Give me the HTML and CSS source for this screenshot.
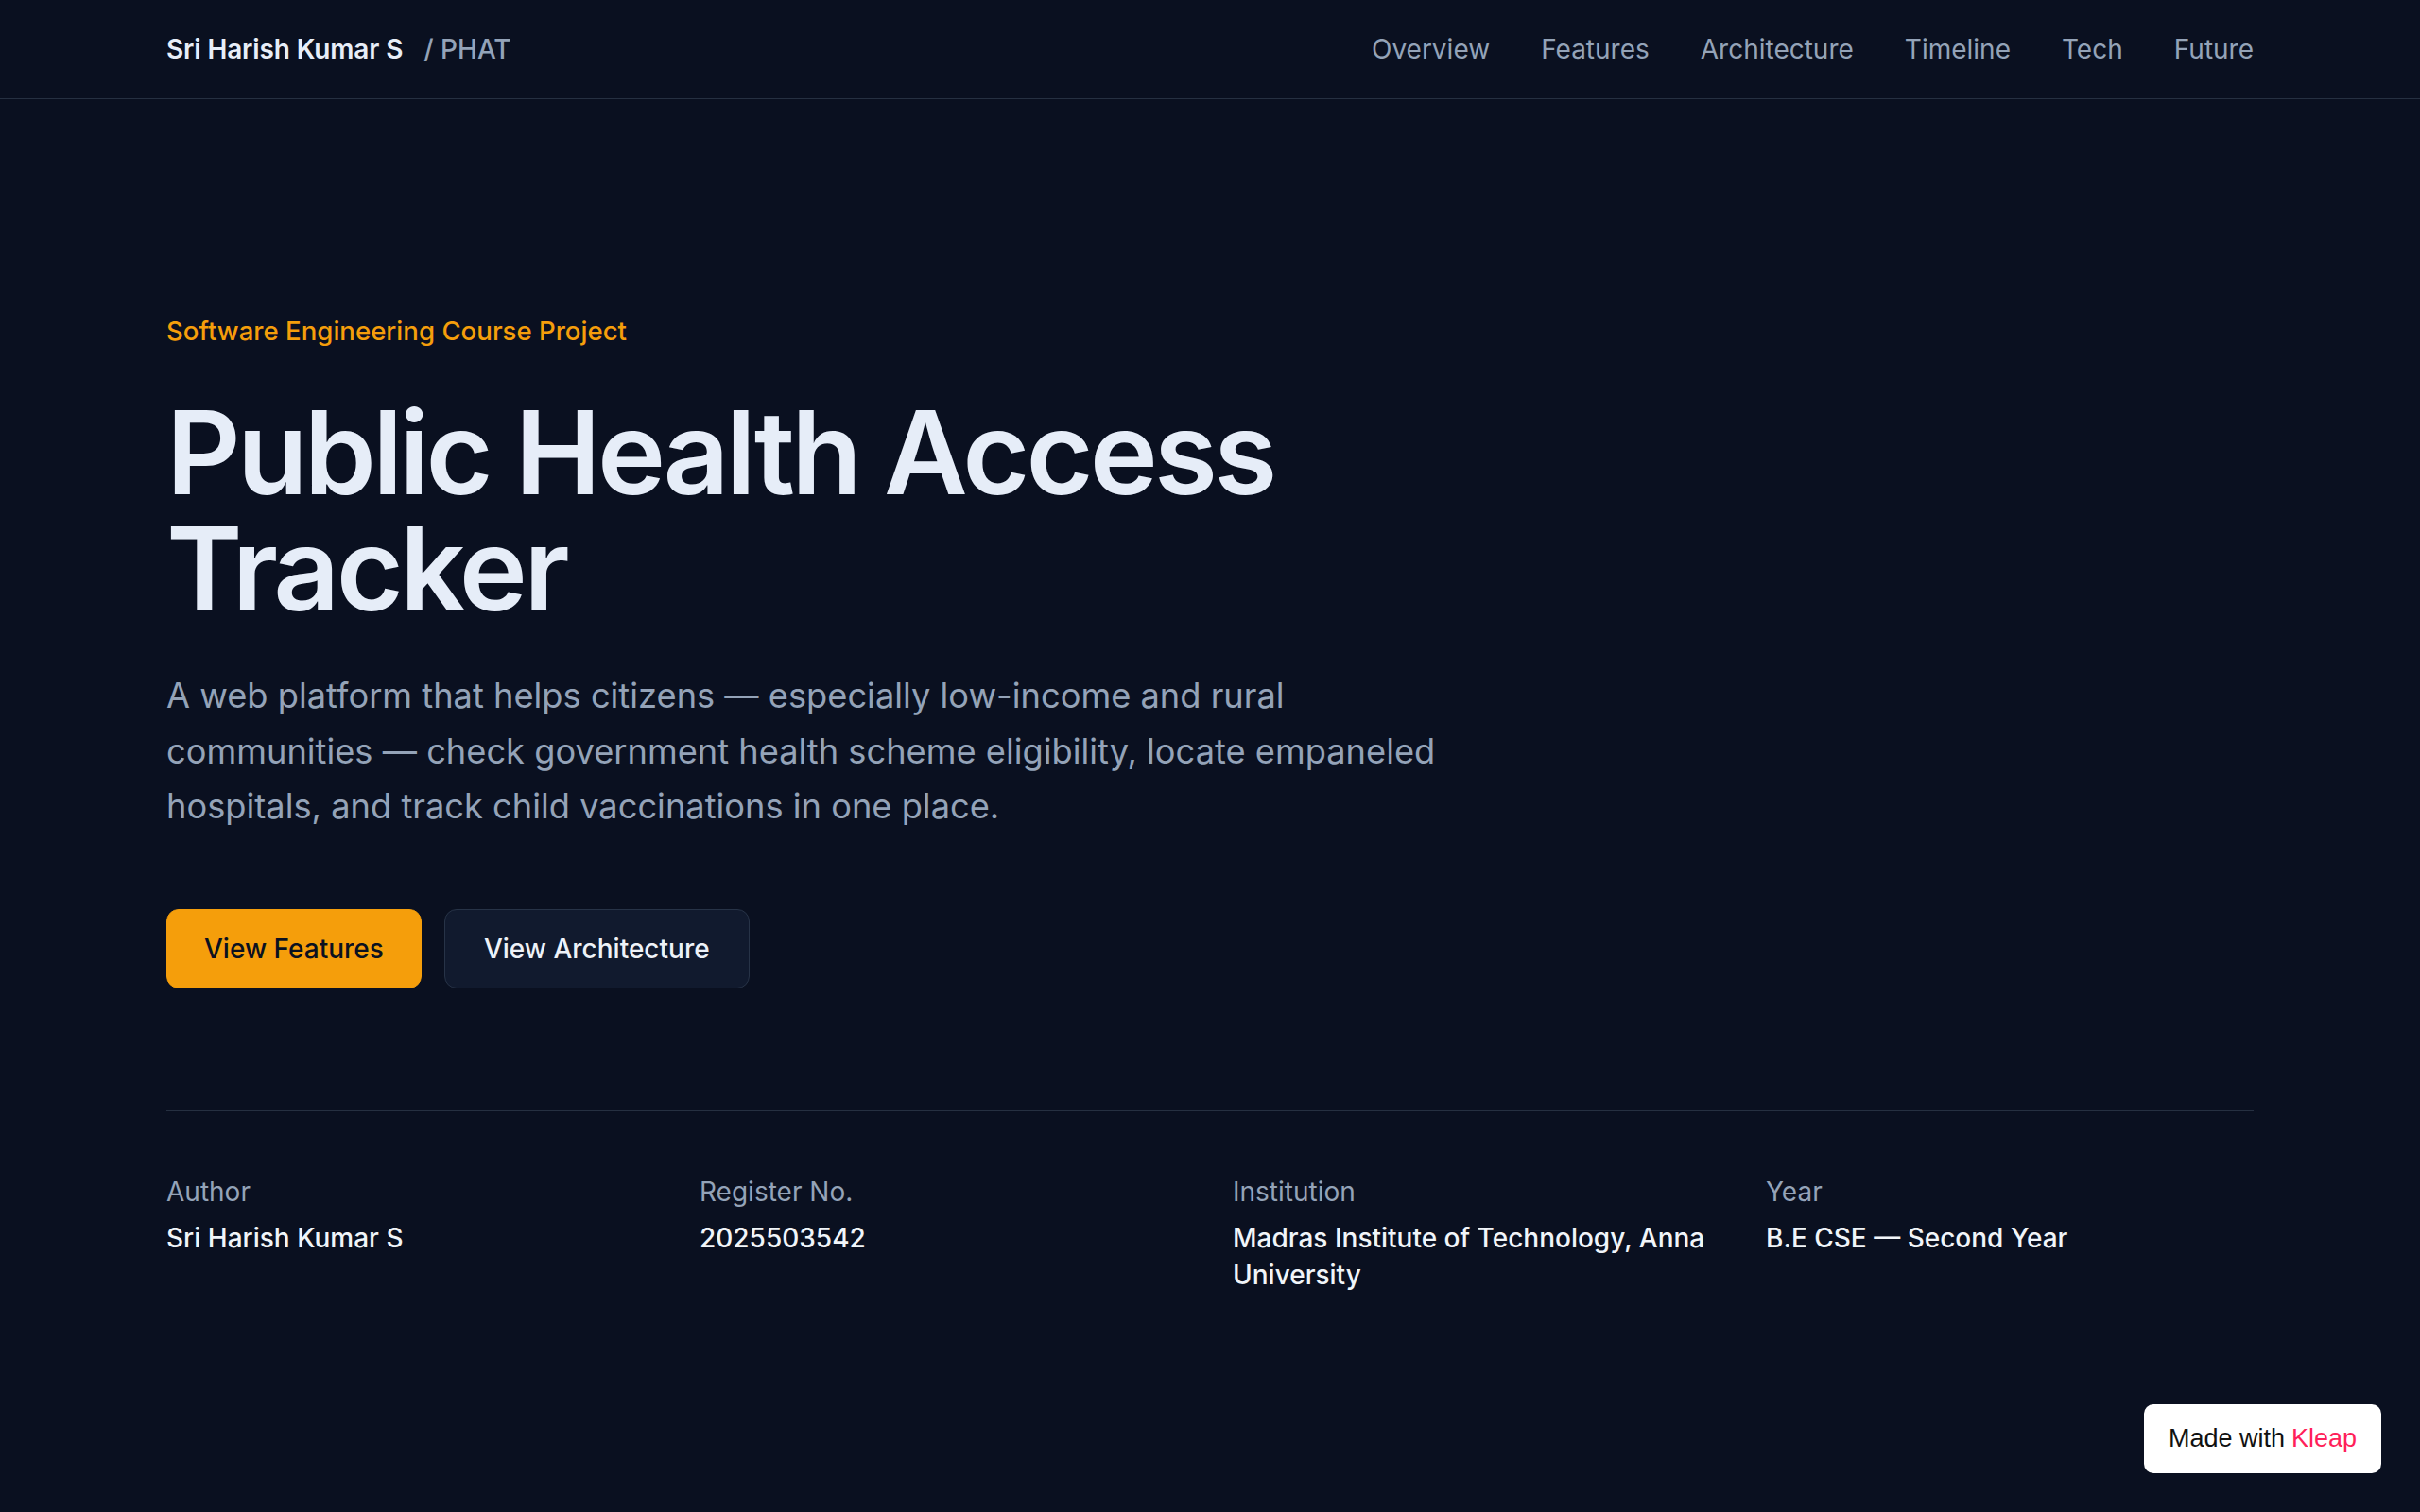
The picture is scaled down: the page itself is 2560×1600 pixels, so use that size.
FILE: index.html
```html
<!DOCTYPE html>
<html lang="en">
<head>
<meta charset="utf-8">
<title>Public Health Access Tracker</title>
<link rel="stylesheet" href="styles.css">
</head>
<body>
<header class="nav">
  <div class="nav-inner">
    <div class="brand"><span class="brand-name">Sri Harish Kumar S</span><span class="brand-sub">/ PHAT</span></div>
    <nav class="links">
      <a href="#overview">Overview</a>
      <a href="#features">Features</a>
      <a href="#architecture">Architecture</a>
      <a href="#timeline">Timeline</a>
      <a href="#tech">Tech</a>
      <a href="#future">Future</a>
    </nav>
  </div>
</header>
<main class="hero">
  <p class="eyebrow">Software Engineering Course Project</p>
  <h1 class="title">Public Health Access<br>Tracker</h1>
  <p class="lead">A web platform that helps citizens — especially low-income and rural communities — check government health scheme eligibility, locate empaneled hospitals, and track child vaccinations in one place.</p>
  <div class="actions">
    <a class="btn btn-primary" href="#features">View Features</a>
    <a class="btn btn-secondary" href="#architecture">View Architecture</a>
  </div>
  <div class="meta">
    <div class="meta-item"><div class="meta-label">Author</div><div class="meta-value">Sri Harish Kumar S</div></div>
    <div class="meta-item"><div class="meta-label">Register No.</div><div class="meta-value">2025503542</div></div>
    <div class="meta-item"><div class="meta-label">Institution</div><div class="meta-value">Madras Institute of Technology, Anna University</div></div>
    <div class="meta-item"><div class="meta-label">Year</div><div class="meta-value">B.E CSE — Second Year</div></div>
  </div>
</main>
<a class="badge" href="#">Made with <span class="kleap">Kleap</span></a>
</body>
</html>
```
FILE: styles.css
```css
* { box-sizing: border-box; }
html, body { margin: 0; padding: 0; }
body {
  background: #0a1020;
  color: #e2e8f0;
  font-family: Inter, "Noto Sans", sans-serif;
  min-height: 1600px;
}
a { text-decoration: none; color: inherit; }

.nav {
  border-bottom: 1px solid #263041;
}
.nav-inner {
  height: 104px;
  padding: 0 176px;
  display: flex;
  align-items: center;
  justify-content: space-between;
}
.brand {
  font-size: 28px;
  display: flex;
  align-items: baseline;
  gap: 22px;
}
.brand-name { font-weight: 600; color: #e8eef8; letter-spacing: -0.005em; }
.brand-sub { font-weight: 500; color: #94a3b8; }
.links {
  display: flex;
  gap: 54px;
  font-size: 28px;
}
.links a { color: #94a3b8; }

.hero {
  padding: 224px 176px 0;
}
.eyebrow {
  margin: 0;
  font-size: 27.6px;
  line-height: 42px;
  color: #f59e0b;
  font-weight: 500;
}
.title {
  margin: 46px 0 0;
  font-size: 122px;
  line-height: 123px;
  font-weight: 600;
  letter-spacing: -0.031em;
  color: #e6edf8;
}
.lead {
  margin: 44px 0 0;
  max-width: 1380px;
  font-size: 36.25px;
  line-height: 58.5px;
  color: #94a3b8;
}
.actions {
  margin-top: 79px;
  display: flex;
  gap: 24px;
}
.btn {
  font-size: 28px;
  line-height: 42px;
  padding: 20px 39px;
  border-radius: 13px;
  border: 1px solid transparent;
  font-weight: 500;
}
.btn-primary {
  background: #f59e0b;
  border-color: #f59e0b;
  color: #0b1120;
}
.btn-secondary {
  padding: 20px 41px;
  background: #111a2e;
  border-color: #273347;
  color: #eef2f8;
}
.meta {
  margin-top: 129px;
  border-top: 1px solid #263041;
  padding-top: 66px;
  display: grid;
  grid-template-columns: repeat(4, 1fr);
  gap: 48px;
}
.meta-label {
  font-size: 28px;
  line-height: 39px;
  color: #94a3b8;
}
.meta-value {
  margin-top: 10px;
  font-size: 28px;
  line-height: 39px;
  font-weight: 500;
  color: #f1f5f9;
}
.badge {
  position: fixed;
  right: 41px;
  bottom: 41px;
  width: 251px;
  height: 73px;
  background: #ffffff;
  border-radius: 10px;
  display: flex;
  align-items: center;
  justify-content: center;
  font-family: "Liberation Sans", Arial, sans-serif;
  font-size: 27px;
  color: #111111;
}
.kleap { color: #ff1f5a; margin-left: 7px; }
```
